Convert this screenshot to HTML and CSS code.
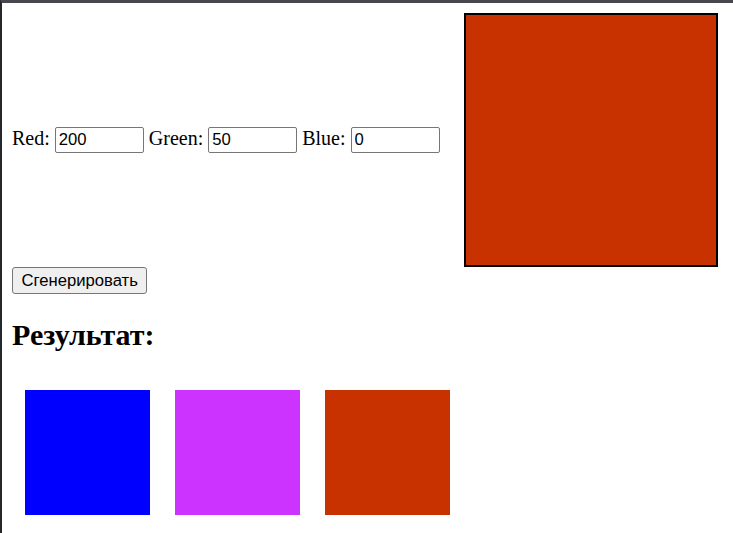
FILE: index.html
```html
<!DOCTYPE html>
<html lang="ru">
<head>
<meta charset="utf-8">
<title>Color</title>
<link rel="stylesheet" href="styles.css">
</head>
<body>
<div class="frame">
  <div class="row">
    <div class="fields">
      <label>Red: <input type="text" value="200"></label>
      <label>Green: <input type="text" value="50"></label>
      <label>Blue: <input type="text" value="0"></label>
    </div>
    <div class="preview"></div>
  </div>
  <button class="gen">Сгенерировать</button>
  <h2 class="title">Результат:</h2>
  <div class="results">
    <div class="swatch blue"></div>
    <div class="swatch purple"></div>
    <div class="swatch red"></div>
  </div>
</div>
</body>
</html>
```

FILE: styles.css
```css
html, body {
  margin: 0;
  padding: 0;
  background: #ffffff;
}
body {
  font-family: "Liberation Serif", "Times New Roman", serif;
  font-size: 20px;
  color: #000;
}
.frame {
  border-top: 3px solid #46474f;
  border-left: 2px solid #25272b;
  padding: 10px 10px 0 10px;
  min-height: 520px;
}
.row {
  display: flex;
  align-items: center;
}
.fields {
  white-space: nowrap;
}
.fields input {
  font-family: "Liberation Sans", Arial, sans-serif;
  font-size: 16.67px;
  width: 89px;
  height: 26px;
  box-sizing: border-box;
  padding: 1px 3px;
  border: 1px solid #767676;
  border-radius: 2px;
  vertical-align: baseline;
}
.preview {
  width: 250px;
  height: 250px;
  border: 2px solid #000;
  background: #c83200;
  margin-left: 24px;
  flex: none;
}
.gen {
  display: block;
  font-family: "Liberation Sans", Arial, sans-serif;
  font-size: 16.67px;
  height: 27px;
  padding: 1px 8.5px;
  border: 1px solid #767676;
  border-radius: 3px;
  background: #efefef;
  color: #000;
}
.title {
  font-size: 30px;
  font-weight: bold;
  margin: 24px 0 0 0;
}
.results {
  display: flex;
  margin-top: 26px;
}
.swatch {
  width: 125px;
  height: 125px;
  margin: 12px 12.5px;
}
.blue { background: #0000ff; }
.purple { background: #cc33ff; }
.red { background: #c83200; }
```
